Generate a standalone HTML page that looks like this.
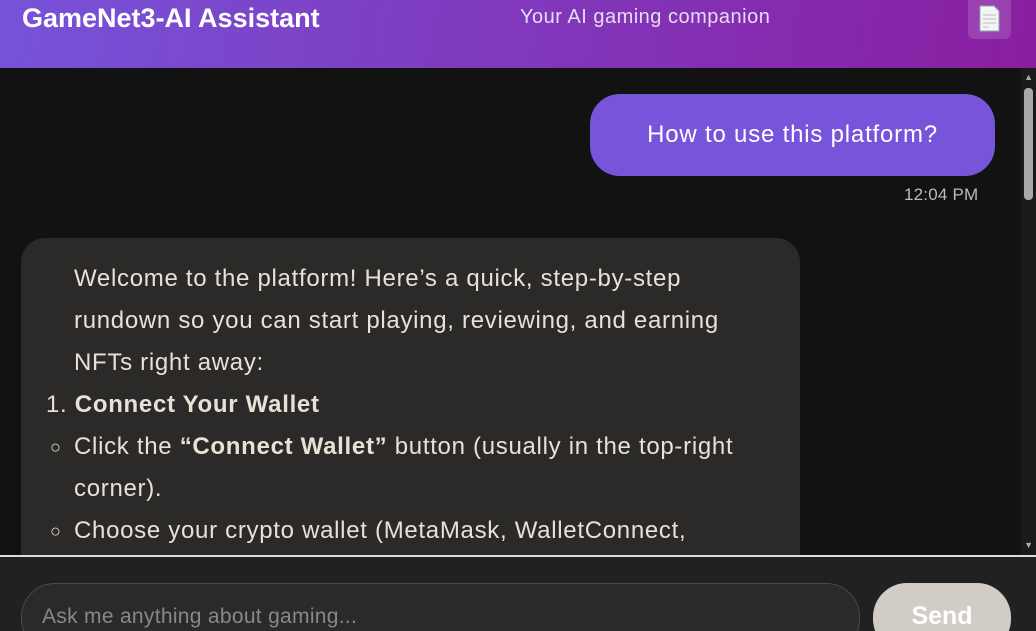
<!DOCTYPE html>
<html style="width:1036px;height:631px;overflow:hidden"><head><style>
*{margin:0;padding:0;box-sizing:border-box}
body{width:1036px;height:631px;overflow:hidden;background:#121212;font-family:"Liberation Sans",sans-serif;position:relative}
.hdr{position:absolute;left:0;top:0;width:1036px;height:68px;background:linear-gradient(100deg,#7653d9,#8a1ea0)}
.title{position:absolute;left:22px;top:3px;color:#fff;font-weight:bold;font-size:27px}
.sub{position:absolute;left:520px;top:6px;color:#e6dcf2;font-size:20px;letter-spacing:0.5px}
.icon{position:absolute;left:968px;top:0;width:43px;height:39px;background:rgba(255,255,255,0.15);border-radius:0 0 6px 6px}
.sb{position:absolute;right:0;top:68px;width:15px;height:487px;background:#1a1a1a}
.thumb{position:absolute;right:3px;top:88px;width:9px;height:112px;background:#a8a8a8;border-radius:4px}
.ub{position:absolute;left:590px;top:94px;width:405px;height:82px;background:#7655db;border-radius:30px;color:#fff;font-size:24px;letter-spacing:0.8px;text-align:center;line-height:82px}
.ts{position:absolute;left:904px;top:185px;color:#bbb;font-size:17px;letter-spacing:0.2px}
.ab{position:absolute;left:21px;top:238px;width:779px;height:340px;background:#2b2a29;border-radius:24px;color:#e8e2d6;font-size:24px;line-height:42px;letter-spacing:0.7px}
.ab div{position:absolute;left:53px;white-space:nowrap}
.foot{position:absolute;left:0;top:555px;width:1036px;height:76px;background:#212121;border-top:2px solid #ddd}
.inp{position:absolute;left:21px;top:583px;width:839px;height:70px;background:#2a2a2a;border:1px solid #4a4a4a;border-radius:34px;color:#888;font-size:21px;letter-spacing:0.3px;padding:21px 0 0 20px}
.send{position:absolute;left:873px;top:583px;width:138px;height:70px;background:#d1cdc4;border-radius:34px;color:#fff;font-weight:bold;font-size:25px;text-align:center;padding-top:19px}
</style></head><body>
<div class="hdr"><div class="title">GameNet3-AI Assistant</div><div class="sub">Your AI gaming companion</div>
<div class="icon"><svg width="43" height="39" viewBox="0 0 43 39"><path d="M12 6h14l5 5v20H12z" fill="#f4f4f4" stroke="#8ab" stroke-width="1"/><path d="M15 15h13M15 19h13M15 23h13M15 27h6" stroke="#bbb" stroke-width="1"/></svg></div></div>
<div class="ub">How to use this platform?</div>
<div class="ts">12:04 PM</div>
<div class="ab">
<div style="top:20px">Welcome to the platform! Here’s a quick, step-by-step</div>
<div style="top:62px">rundown so you can start playing, reviewing, and earning</div>
<div style="top:104px">NFTs right away:</div>
<div style="top:146px;left:25px">1. <b>Connect Your Wallet</b></div>
<div style="top:188px;left:29px;font-size:18px">○</div><div style="top:188px">Click the <b>“Connect Wallet”</b> button (usually in the top-right</div>
<div style="top:230px">corner).</div>
<div style="top:272px;left:29px;font-size:18px">○</div><div style="top:272px">Choose your crypto wallet (MetaMask, WalletConnect,</div>
</div>
<div class="sb"></div><div class="thumb"></div>
<div style="position:absolute;right:3px;top:72px;color:#aaa;font-size:9px">▲</div>
<div style="position:absolute;right:3px;top:540px;color:#aaa;font-size:9px">▼</div>
<div class="foot"></div>
<div class="inp">Ask me anything about gaming...</div>
<div class="send">Send</div>
</body></html>
